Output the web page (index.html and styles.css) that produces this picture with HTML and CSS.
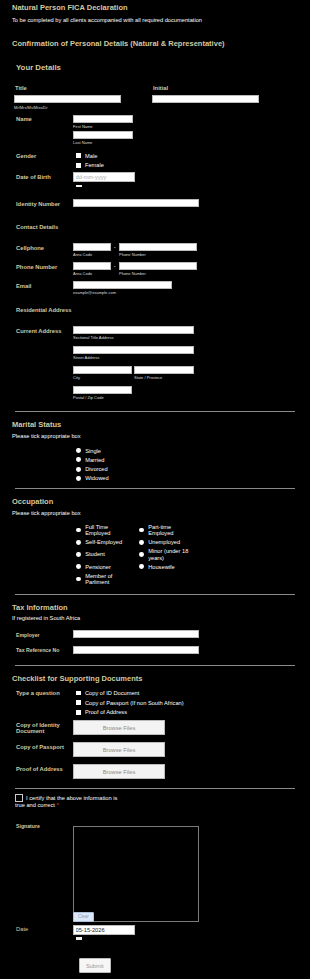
FILE: index.html
```html
<!DOCTYPE html>
<html>
<head>
    <title>Natural Person FICA Declaration</title>
    <link rel="stylesheet" href="styles.css">
</head>
<body>
<div class="form">
    <div class="header">
        <h1>Natural Person FICA Declaration</h1>
        <p class="desc">To be completed by all clients accompanied with all required documentation</p>
    </div>
    <h2 class="sec-title big">Confirmation of Personal Details (Natural &amp; Representative)</h2>
    <h3 class="your-details">Your Details</h3>

    <div class="pair">
        <div class="pair-col">
            <div class="top-label">Title</div>
            <input class="text-input w-pair" type="text">
            <div class="sub">Mr/Mrs/Ms/Miss/Dr</div>
        </div>
        <div class="pair-col">
            <div class="top-label">Initial</div>
            <input class="text-input w-pair" type="text">
        </div>
    </div>

    <div class="row mt-5">
        <div class="row-label">Name</div>
        <div class="fields">
            <input class="text-input w-60" type="text">
            <div class="sub">First Name</div>
            <input class="text-input w-60 next" type="text">
            <div class="sub">Last Name</div>
        </div>
    </div>

    <div class="row mt-6">
        <div class="row-label">Gender</div>
        <div class="fields">
            <label class="option"><span class="check"></span>Male</label>
            <label class="option"><span class="check"></span>Female</label>
        </div>
    </div>

    <div class="row mt-2">
        <div class="row-label">Date of Birth</div>
        <div class="fields">
            <input class="text-input date-input" type="text" placeholder="dd-mm-yyyy">
            <span class="cal-bar"></span>
        </div>
    </div>

    <div class="row mt-12">
        <div class="row-label">Identity Number</div>
        <div class="fields">
            <input class="text-input w-126" type="text">
        </div>
    </div>

    <div class="row mt-16">
        <div class="row-label wide">Contact Details</div>
    </div>

    <div class="row mt-12">
        <div class="row-label">Cellphone</div>
        <div class="phone">
            <div class="fields">
                <input class="text-input w-37" type="text">
                <div class="sub tight">Area Code</div>
            </div>
            <span class="dash">-</span>
            <div class="fields">
                <input class="text-input w-78" type="text">
                <div class="sub tight">Phone Number</div>
            </div>
        </div>
    </div>

    <div class="row mt-5">
        <div class="row-label">Phone Number</div>
        <div class="phone">
            <div class="fields">
                <input class="text-input w-37" type="text">
                <div class="sub tight">Area Code</div>
            </div>
            <span class="dash">-</span>
            <div class="fields">
                <input class="text-input w-78" type="text">
                <div class="sub tight">Phone Number</div>
            </div>
        </div>
    </div>

    <div class="row mt-5">
        <div class="row-label">Email</div>
        <div class="fields">
            <input class="text-input w-99" type="text">
            <div class="sub tight">example@example.com</div>
        </div>
    </div>

    <div class="row mt-12">
        <div class="row-label wide">Residential Address</div>
    </div>

    <div class="row mt-12">
        <div class="row-label">Current Address</div>
        <div class="fields address">
            <div class="addr-line">
                <input class="text-input w-120" type="text">
                <div class="sub tight">Sectional Title Address</div>
            </div>
            <div class="addr-line">
                <input class="text-input w-120" type="text">
                <div class="sub tight">Street Address</div>
            </div>
            <div class="addr-line split">
                <div>
                    <input class="text-input w-58" type="text">
                    <div class="sub tight">City</div>
                </div>
                <div>
                    <input class="text-input w-59" type="text">
                    <div class="sub tight">State / Province</div>
                </div>
            </div>
            <div class="addr-line">
                <input class="text-input w-58" type="text">
                <div class="sub tight">Postal / Zip Code</div>
            </div>
        </div>
    </div>

    <div class="divider mt-11"></div>

    <h2 class="sec-title">Marital Status</h2>
    <p class="sec-desc">Please tick appropriate box</p>
    <div class="radio-list">
        <label class="option radio-opt"><span class="radio"></span>Single</label>
        <label class="option radio-opt"><span class="radio"></span>Married</label>
        <label class="option radio-opt"><span class="radio"></span>Divorced</label>
        <label class="option radio-opt"><span class="radio"></span>Widowed</label>
    </div>

    <div class="divider mt-5"></div>

    <h2 class="sec-title">Occupation</h2>
    <p class="sec-desc">Please tick appropriate box</p>
    <div class="radio-grid">
        <label class="cell"><span class="radio"></span><span class="cell-text">Full Time Employed</span></label>
        <label class="cell"><span class="radio"></span><span class="cell-text">Part-time Employed</span></label>
        <label class="cell"><span class="radio"></span><span class="cell-text">Self-Employed</span></label>
        <label class="cell"><span class="radio"></span><span class="cell-text">Unemployed</span></label>
        <label class="cell"><span class="radio"></span><span class="cell-text">Student</span></label>
        <label class="cell"><span class="radio"></span><span class="cell-text">Minor (under 18 years)</span></label>
        <label class="cell"><span class="radio"></span><span class="cell-text">Pensioner</span></label>
        <label class="cell"><span class="radio"></span><span class="cell-text">Housewife</span></label>
        <label class="cell"><span class="radio"></span><span class="cell-text">Member of Parliment</span></label>
    </div>

    <div class="divider mt-8"></div>

    <h2 class="sec-title">Tax Information</h2>
    <p class="sec-desc">If registered in South Africa</p>

    <div class="row mt-8">
        <div class="row-label small">Employer</div>
        <div class="fields"><input class="text-input w-126" type="text"></div>
    </div>
    <div class="row mt-7">
        <div class="row-label small">Tax Reference No</div>
        <div class="fields"><input class="text-input w-126" type="text"></div>
    </div>

    <div class="divider mt-11"></div>

    <h2 class="sec-title">Checklist for Supporting Documents</h2>

    <div class="row mt-4">
        <div class="row-label">Type a question</div>
        <div class="fields">
            <label class="option doc-opt"><span class="check"></span>Copy of ID Document</label>
            <label class="option doc-opt"><span class="check"></span>Copy of Passport (If non South African)</label>
            <label class="option doc-opt"><span class="check"></span>Proof of Address</label>
        </div>
    </div>

    <div class="row mt-3">
        <div class="row-label two-line">Copy of Identity Document</div>
        <button class="browse" type="button">Browse Files</button>
    </div>
    <div class="row mt-7">
        <div class="row-label">Copy of Passport</div>
        <button class="browse" type="button">Browse Files</button>
    </div>
    <div class="row mt-7">
        <div class="row-label">Proof of Address</div>
        <button class="browse" type="button">Browse Files</button>
    </div>

    <div class="divider mt-9"></div>

    <div class="certify">
        <span class="cert-box"></span>I certify that the above information is true and correct <span class="req">*</span>
    </div>

    <div class="row mt-17">
        <div class="row-label sig-label">Signature</div>
        <div class="sig-pad">
            <button class="clear-btn" type="button">Clear</button>
        </div>
    </div>

    <div class="row mt-3">
        <div class="row-label plain">Date</div>
        <div class="fields">
            <input class="text-input date-input" type="text" value="05-15-2026">
            <span class="cal-bar"></span>
        </div>
    </div>

    <div class="submit-row">
        <button class="submit-btn" type="button">Submit</button>
    </div>
</div>
</body>
</html>
```

FILE: styles.css
```css
body {
    margin: 0;
    background: #000;
    color: #fff;
    font-family: "Liberation Sans", Arial, sans-serif;
}

.form {
    width: 310px;
    padding-top: 3px;
    padding-bottom: 7px;
}

.header {
    padding: 0 12px;
}

h1 {
    margin: 0;
    font-size: 7.5px;
    line-height: 10px;
    color: #d3c9a0;
}

.desc {
    margin: 3px 0 0;
    font-size: 5.7px;
    line-height: 8px;
}

.sec-title {
    margin: 8px 12px 0;
    font-size: 7.5px;
    line-height: 10px;
    color: #d3c9a0;
}

.sec-title.big {
    margin-top: 15px;
}

.your-details {
    margin: 14px 16px 0;
    font-size: 7.8px;
    line-height: 10px;
    color: #d3c9a0;
}

.sec-desc {
    margin: 1.5px 12px 0;
    font-size: 5.7px;
    line-height: 8px;
}

/* title / initial */
.pair {
    display: flex;
    margin-top: 11.5px;
    padding-left: 14px;
}

.pair-col {
    width: 138px;
}

.top-label {
    padding-left: 1px;
    font-size: 5.8px;
    line-height: 7px;
    font-weight: bold;
    color: #d3c9a0;
    margin-bottom: 3.5px;
}

.sub {
    font-size: 4px;
    line-height: 5px;
    margin-top: 1.5px;
    color: #ddd;
}

.sub.tight {
    margin-top: 1px;
}

/* label + field rows */
.row {
    display: flex;
    padding-left: 16px;
}

.row-label {
    width: 57px;
    flex-shrink: 0;
    padding-top: 1.5px;
    font-size: 5.8px;
    line-height: 7px;
    font-weight: bold;
    color: #d3c9a0;
}

.row-label.wide {
    width: auto;
    padding-top: 0;
}

.row-label.small {
    font-size: 5.2px;
}

.row-label.two-line {
    line-height: 6px;
    width: 48px;
    margin-right: 9px;
}

.row-label.sig-label {
    margin-top: -3px;
    padding-top: 0;
    font-size: 5.2px;
}

.row-label.plain {
    font-weight: normal;
    padding-top: 1px;
}

.mt-2 { margin-top: 2px; }
.mt-3 { margin-top: 3px; }
.mt-4 { margin-top: 4px; }
.mt-5 { margin-top: 5px; }
.mt-6 { margin-top: 6px; }
.mt-7 { margin-top: 7px; }
.mt-8 { margin-top: 8px; }
.mt-9 { margin-top: 9px; }
.mt-11 { margin-top: 11px; }
.mt-12 { margin-top: 12px; }
.mt-16 { margin-top: 16.5px; }
.mt-17 { margin-top: 17px; }

.fields {
    display: flex;
    flex-direction: column;
    align-items: flex-start;
}

.text-input {
    display: block;
    box-sizing: border-box;
    height: 8px;
    margin: 0;
    padding: 0 2px;
    border: 1px solid #bbb;
    background: #fff;
    font-family: inherit;
    font-size: 5.7px;
    color: #222;
}

.text-input.next {
    margin-top: 1.5px;
}

.w-pair { width: 107px; }
.w-37 { width: 37.5px; }
.w-58 { width: 58.5px; }
.w-59 { width: 59.5px; }
.w-60 { width: 60px; }
.w-78 { width: 78px; }
.w-99 { width: 99px; }
.w-120 { width: 120.5px; }
.w-126 { width: 126px; }

.date-input {
    width: 61.5px;
    height: 10px;
    padding: 0 1.5px;
}

.date-input::placeholder {
    color: #aaa;
}

.cal-bar {
    display: block;
    width: 5.5px;
    height: 2.5px;
    margin: 2.5px 0 0 3px;
    background: #eee;
}

/* checkboxes & radios */
.option {
    display: flex;
    align-items: center;
    height: 9.5px;
    font-size: 5.7px;
}

.check {
    width: 4.6px;
    height: 4.6px;
    margin: 0 4.4px 0 3px;
    background: #fff;
}

.radio {
    flex-shrink: 0;
    width: 4.8px;
    height: 4.8px;
    margin: 0 4.4px 0 3px;
    border-radius: 50%;
    background: #fff;
}

.radio-list {
    margin-top: 6.4px;
    padding-left: 73px;
}

.radio-opt {
    height: 9.3px;
}

.doc-opt {
    height: 9.7px;
}

.radio-grid {
    display: grid;
    grid-template-columns: 63px 63px;
    row-gap: 2.5px;
    margin-top: 7px;
    padding-left: 73px;
}

.cell {
    display: flex;
    align-items: center;
    font-size: 5.7px;
    line-height: 6.5px;
}

.cell-text {
    width: 46px;
}

.phone {
    display: flex;
    align-items: flex-start;
}

.dash {
    width: 8.5px;
    text-align: center;
    font-size: 5.5px;
    line-height: 8px;
}

.addr-line {
    margin-bottom: 6px;
}

.addr-line:last-child {
    margin-bottom: 0;
}

.addr-line.split {
    display: flex;
    gap: 2.5px;
}

.divider {
    height: 1px;
    margin-left: 15px;
    margin-right: 15px;
    background: #8a8a8a;
}

/* file uploads */
.browse {
    width: 92px;
    height: 15px;
    margin: 0;
    padding: 0;
    border: 1px solid #bbb;
    background: #f3f3f3;
    color: #8a8a8a;
    font-family: inherit;
    font-size: 5.7px;
}

.certify {
    width: 112px;
    margin-top: 5px;
    padding-left: 15px;
    font-size: 5.7px;
    line-height: 7px;
}

.cert-box {
    display: inline-block;
    box-sizing: border-box;
    width: 7.5px;
    height: 7.5px;
    margin-right: 3.5px;
    vertical-align: -2px;
    border: 1px solid #ccc;
}

.req {
    color: #e03b2f;
}

.sig-pad {
    position: relative;
    box-sizing: border-box;
    width: 126px;
    height: 96px;
    border: 1px solid #7a7a7a;
}

.clear-btn {
    position: absolute;
    left: -1px;
    bottom: -1px;
    width: 21px;
    height: 10px;
    margin: 0;
    padding: 0;
    border: 1px solid #a9bfdc;
    border-radius: 1px;
    background: #dce8f7;
    color: #8e9db3;
    font-family: inherit;
    font-size: 4.5px;
}

.submit-row {
    margin-top: 14px;
    padding-left: 79px;
}

.submit-btn {
    width: 31.5px;
    height: 15px;
    margin: 0;
    padding: 0;
    border: 1px solid #bbb;
    border-radius: 1px;
    background: #f6f6f6;
    color: #999;
    font-family: inherit;
    font-size: 5.7px;
}
```
